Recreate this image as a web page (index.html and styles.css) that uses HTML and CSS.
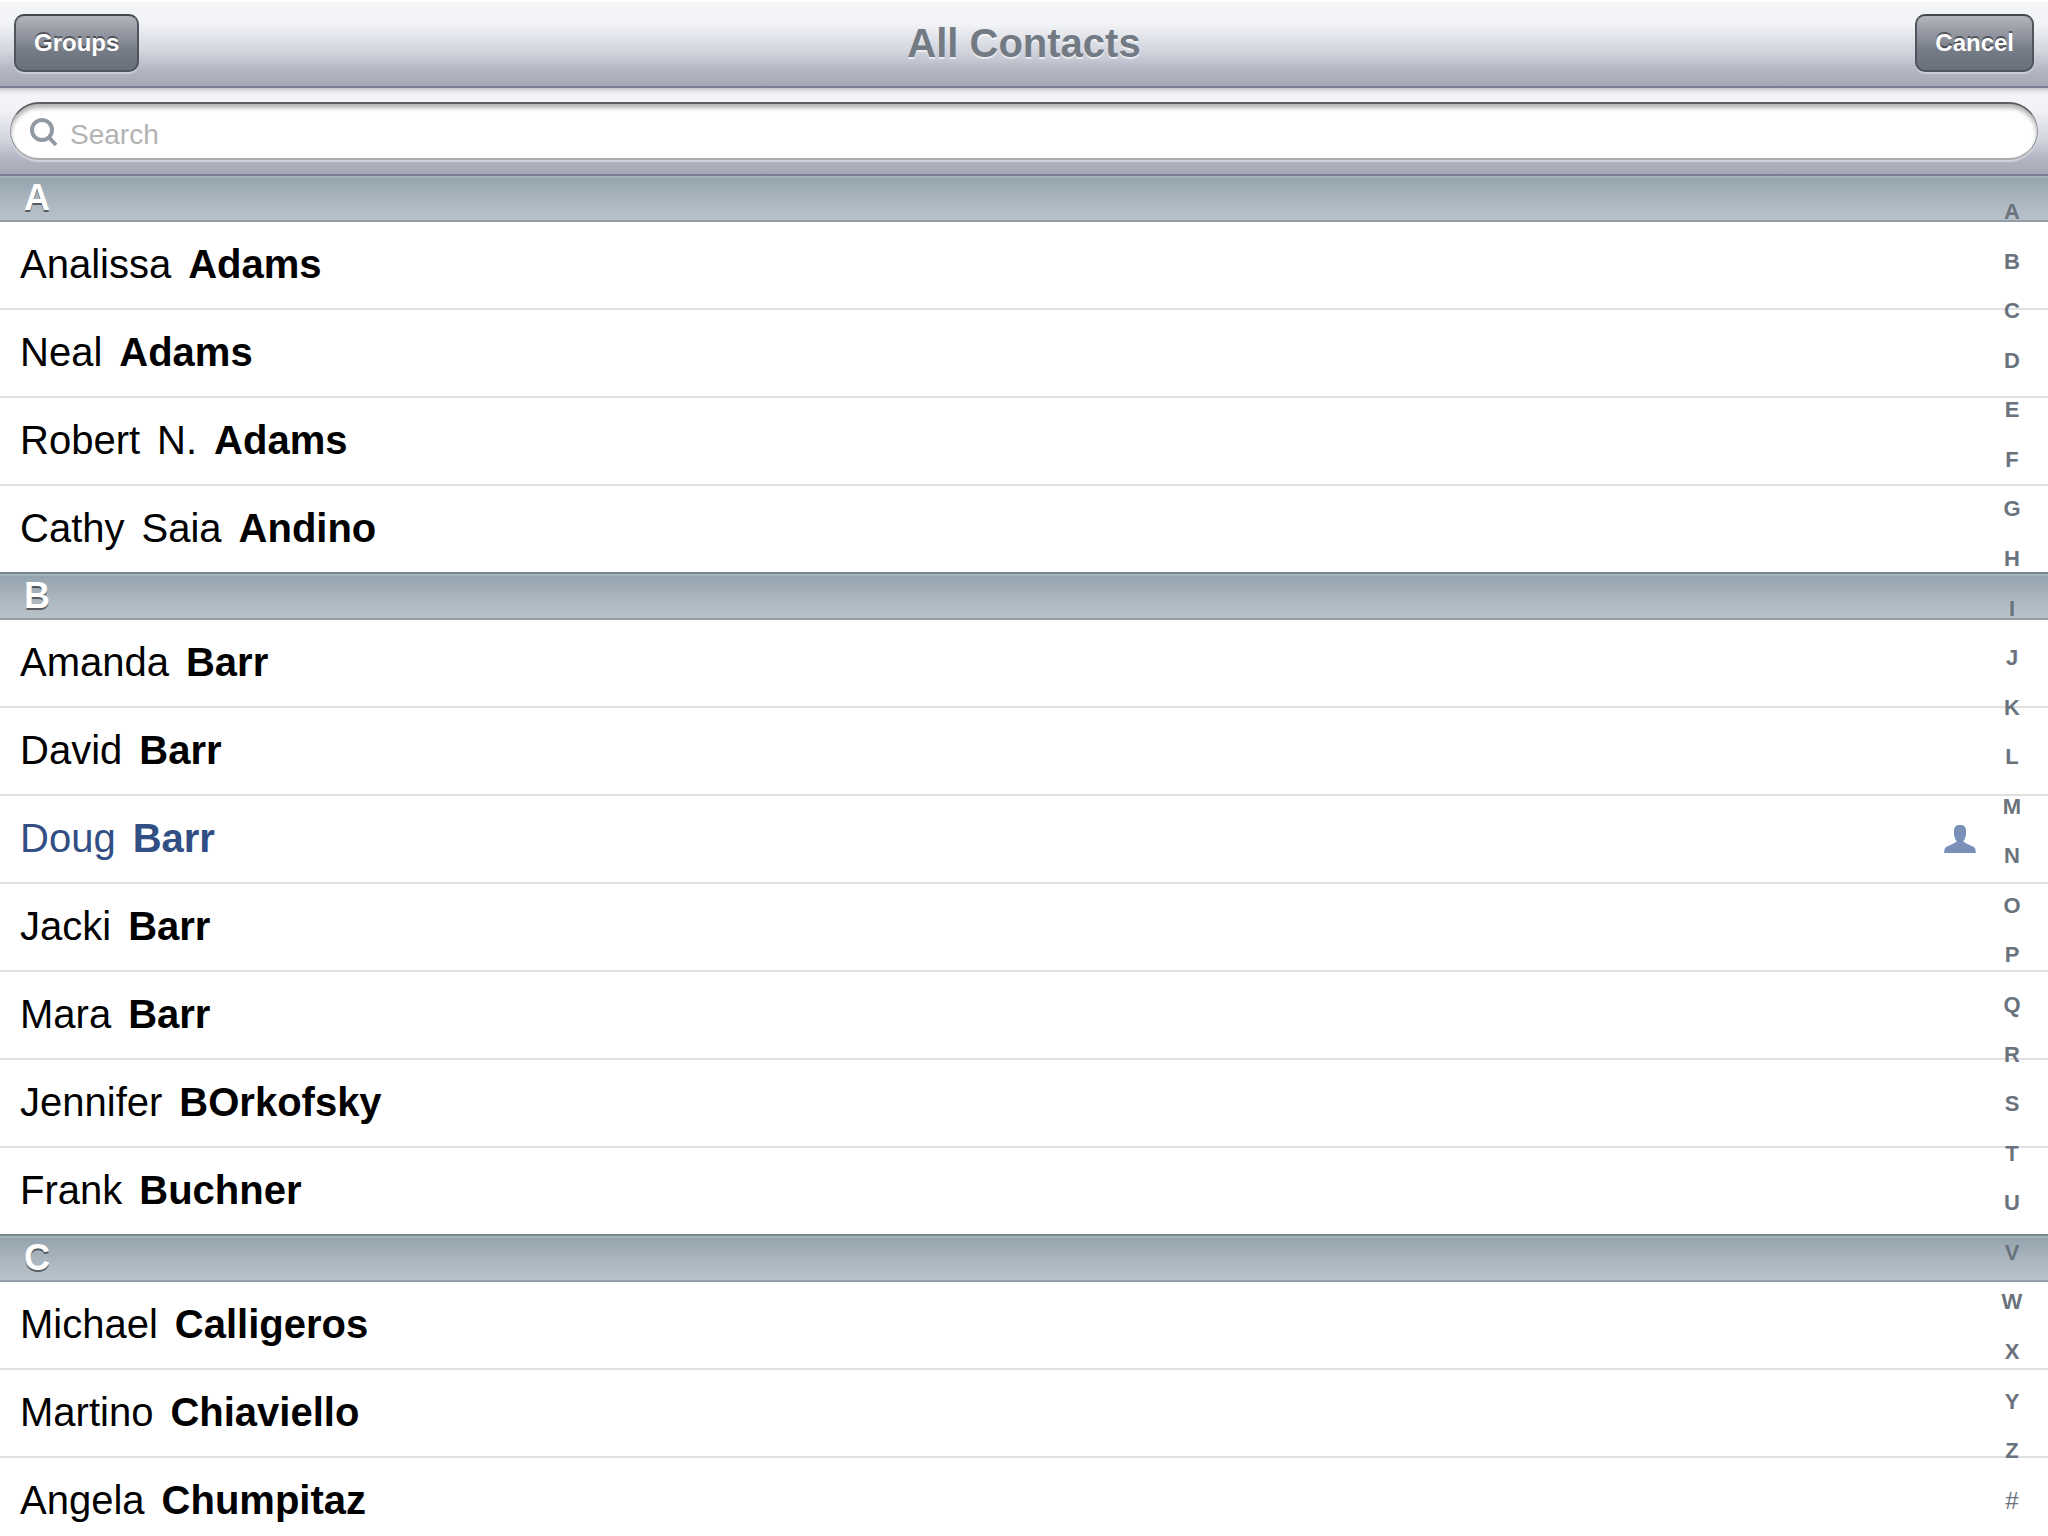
FILE: index.html
```html
<!DOCTYPE html>
<html lang="en">
<head>
<meta charset="utf-8">
<meta name="viewport" content="width=device-width, initial-scale=1">
<title>All Contacts</title>
<link rel="stylesheet" href="styles.css">
</head>
<body>
<header class="navbar">
  <button type="button" class="nav-button">Groups</button>
  <h1 class="title">All Contacts</h1>
  <button type="button" class="nav-button nav-button-end">Cancel</button>
</header>
<form class="search-bar" role="search">
  <label class="search-field">
    <svg class="search-icon" viewBox="0 0 30 32" aria-hidden="true">
      <circle cx="13" cy="15" r="10"/>
      <path d="M19.500 22L27 30"/>
    </svg>
    <input class="search-input" type="text" placeholder="Search" aria-label="Search">
  </label>
</form>
<main class="contacts">
  <div class="list">
    <section id="A">
      <h2 class="section-title">A</h2>
      <ul class="rows">
        <li class="row"><a class="name" href="#"><span>Analissa</span><b>Adams</b></a></li>
        <li class="row"><a class="name" href="#"><span>Neal</span><b>Adams</b></a></li>
        <li class="row"><a class="name" href="#"><span>Robert</span><span>N.</span><b>Adams</b></a></li>
        <li class="row"><a class="name" href="#"><span>Cathy</span><span>Saia</span><b>Andino</b></a></li>
      </ul>
    </section>
    <section id="B">
      <h2 class="section-title">B</h2>
      <ul class="rows">
        <li class="row"><a class="name" href="#"><span>Amanda</span><b>Barr</b></a></li>
        <li class="row"><a class="name" href="#"><span>David</span><b>Barr</b></a></li>
        <li class="row row-me"><a class="name" href="#"><span>Doug</span><b>Barr</b></a>
          <svg class="person-icon" viewBox="0 0 32 28" aria-hidden="true">
            <path d="M16 0C20 0 22 2 22 5.500C22 8 22.200 10.500 21.400 12C21 14.200 20 15.300 19.200 16C20.500 18 25 19.600 28.500 21.300C31 22.500 31.800 24 31.800 28H.2C.2 24 1 22.500 3.500 21.300C7 19.600 11.500 18 12.800 16C12 15.300 11 14.200 10.600 12C9.800 10.500 10 8 10 5.500C10 2 12 0 16 0Z"/>
          </svg>
        </li>
        <li class="row"><a class="name" href="#"><span>Jacki</span><b>Barr</b></a></li>
        <li class="row"><a class="name" href="#"><span>Mara</span><b>Barr</b></a></li>
        <li class="row"><a class="name" href="#"><span>Jennifer</span><b>BOrkofsky</b></a></li>
        <li class="row"><a class="name" href="#"><span>Frank</span><b>Buchner</b></a></li>
      </ul>
    </section>
    <section id="C">
      <h2 class="section-title">C</h2>
      <ul class="rows">
        <li class="row"><a class="name" href="#"><span>Michael</span><b>Calligeros</b></a></li>
        <li class="row"><a class="name" href="#"><span>Martino</span><b>Chiaviello</b></a></li>
        <li class="row"><a class="name" href="#"><span>Angela</span><b>Chumpitaz</b></a></li>
      </ul>
    </section>
  </div>
  <nav class="index" aria-label="Section index">
    <a href="#A">A</a><a href="#B">B</a><a href="#C">C</a><a href="#D">D</a><a href="#E">E</a><a href="#F">F</a><a href="#G">G</a><a href="#H">H</a><a href="#I">I</a><a href="#J">J</a><a href="#K">K</a><a href="#L">L</a><a href="#M">M</a><a href="#N">N</a><a href="#O">O</a><a href="#P">P</a><a href="#Q">Q</a><a href="#R">R</a><a href="#S">S</a><a href="#T">T</a><a href="#U">U</a><a href="#V">V</a><a href="#W">W</a><a href="#X">X</a><a href="#Y">Y</a><a href="#Z">Z</a><a class="index-other" href="#other">#</a>
  </nav>
</main>
</body>
</html>
```
FILE: styles.css
```css
* {
  box-sizing: border-box;
}

body {
  margin: 0;
  height: 100vh;
  display: flex;
  flex-direction: column;
  overflow: hidden;
  background: #fff;
  color: #000;
  font-family: "Liberation Sans", Arial, Helvetica, sans-serif;
}

/* Top bar */
.navbar {
  flex: none;
  display: grid;
  grid-template-columns: 1fr auto 1fr;
  align-items: center;
  height: 88px;
  padding: 0 14px;
  border-bottom: 2px solid #7b8095;
  background: linear-gradient(#fff 2px, #f4f5f7 2px, #f2f3f6 24px, #d3d6df 50px, #b5b6c4 70px, #a4a7b5 86px);
}

.title {
  margin: 0;
  color: #727a83;
  font-size: 40px;
  line-height: 48px;
  text-shadow: 0 2px 0 rgba(255, 255, 255, .6);
}

.nav-button {
  justify-self: start;
  height: 58px;
  padding: 0 18px;
  border: 2px solid #50555d;
  border-top-color: #43464b;
  border-radius: 10px;
  background: linear-gradient(#b2b5ba, #9295a0 35%, #747b85 65%, #68707c);
  box-shadow: 0 2px 0 rgba(255, 255, 255, .35);
  color: #fff;
  font: bold 24px/28px "Liberation Sans", Arial, Helvetica, sans-serif;
  text-shadow: 0 -2px 0 rgba(0, 0, 0, .45);
}

.nav-button-end {
  justify-self: end;
}

/* Search */
.search-bar {
  flex: none;
  height: 88px;
  padding: 14px 10px;
  border-bottom: 2px solid #7b8095;
  background: linear-gradient(#c4c6c9, #e2e3e5 3px, #f3f4f6 7px, #f2f3f6 22px, #d3d6df 50px, #b5b6c4 70px, #a4a7b5 86px);
}

.search-field {
  display: flex;
  align-items: center;
  gap: 11px;
  height: 58px;
  padding: 0 24px 0 18px;
  border: 1px solid #8d8f92;
  border-top: 2px solid #5c5c5e;
  border-bottom: 2px solid #adadb0;
  border-radius: 29px;
  background: #fff;
  box-shadow: inset 0 4px 4px rgba(0, 0, 0, .3), 0 2px 0 rgba(255, 255, 255, .4);
}

.search-icon {
  flex: none;
  width: 30px;
  height: 32px;
  fill: none;
  stroke: #919aa3;
  stroke-width: 4;
}

.search-input {
  flex: 1;
  min-width: 0;
  padding: 8px 0 0;
  border: 0;
  outline: 0;
  background: transparent;
  color: #000;
  font: 28px/32px "Liberation Sans", Arial, Helvetica, sans-serif;
}

.search-input::placeholder {
  color: #b3b3b3;
  opacity: 1;
}

/* Contact list */
.contacts {
  flex: 1;
  min-height: 0;
  position: relative;
}

.list {
  height: 100%;
  overflow-y: auto;
  scrollbar-width: none;
}

.section-title {
  height: 48px;
  margin: 0;
  padding: 0 24px;
  border-top: 2px solid #76858e;
  border-bottom: 2px solid #929da7;
  background: linear-gradient(#a6b4bc 2px, #94a4ae 2px, #a9b4bd 50%, #b4bdc6 80%, #b6c1c8);
  color: #fff;
  font-size: 36px;
  line-height: 44px;
  text-shadow: 0 2px 0 rgba(0, 0, 0, .5);
}

/* The search bar's lower edge stands in for the first header's top line. */
.list > :first-child .section-title {
  height: 46px;
  border-top: 0;
}

.rows {
  margin: 0;
  padding: 0;
  list-style: none;
}

.row {
  display: flex;
  align-items: center;
  justify-content: space-between;
  height: 88px;
  padding: 0 72px 0 20px;
  border-bottom: 2px solid #e0e0e0;
  color: #000;
}

.row:last-child {
  height: 86px;
  border-bottom: 0;
}

.row-me {
  color: #324f85;
}

.name {
  display: flex;
  gap: 17px;
  padding-bottom: 2px;
  color: inherit;
  font-size: 40px;
  line-height: 48px;
  text-decoration: none;
}

.person-icon {
  width: 32px;
  height: 28px;
  fill: #7b90b9;
}

/* Letter index over the list's right edge */
.index {
  position: absolute;
  top: 23px;
  right: 20px;
  bottom: 22px;
  width: 32px;
  display: flex;
  flex-direction: column;
  justify-content: space-between;
  text-align: center;
}

.index a {
  color: #6a737d;
  font-size: 22px;
  font-weight: bold;
  line-height: 26px;
  text-decoration: none;
}

.index .index-other {
  font-size: 24px;
  font-weight: normal;
}
```
